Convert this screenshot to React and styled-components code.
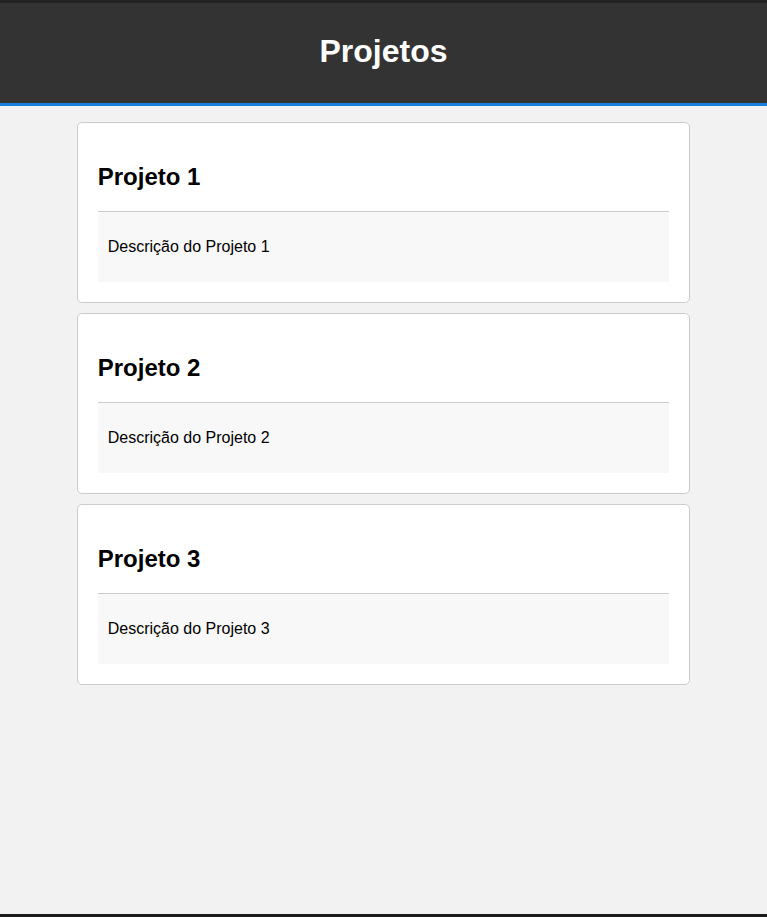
import React from "react";
import styled, { createGlobalStyle } from "styled-components";

const GlobalStyle = createGlobalStyle`
  html, body {
    margin: 0;
    padding: 0;
    background-color: #f2f2f2;
    font-family: "Liberation Sans", Arial, sans-serif;
  }
`;

const Page = styled.div`
  min-height: 100vh;
  box-sizing: border-box;
  border-top: 3px solid #222;
  border-bottom: 3px solid #1b1b1b;
  background-color: #f2f2f2;
`;

const Header = styled.header`
  height: 103px;
  box-sizing: border-box;
  padding-bottom: 4px;
  background-color: #333;
  border-bottom: 3px solid #1a7ee0;
  display: flex;
  align-items: center;
  justify-content: center;
`;

const Title = styled.h1`
  margin: 0;
  color: #fff;
  font-size: 32px;
  font-weight: bold;
`;

const Main = styled.main`
  width: 80%;
  margin: 16px auto 0;
  display: flex;
  flex-direction: column;
  gap: 10px;
`;

const ProjectCard = styled.section`
  background-color: #fff;
  border: 1px solid #ccc;
  border-radius: 5px;
  padding: 0 20px 20px;
`;

const ProjectName = styled.h2`
  font-size: 24px;
  margin: 20px 0;
  padding-top: 20px;
  color: #000;
`;

const Description = styled.div`
  background-color: #f8f8f8;
  border-top: 1px solid #ccc;
  padding: 10px;

  p {
    margin: 16px 0;
    font-size: 16px;
    color: #000;
  }
`;

const projects = [
  { name: "Projeto 1", text: "Descrição do Projeto 1" },
  { name: "Projeto 2", text: "Descrição do Projeto 2" },
  { name: "Projeto 3", text: "Descrição do Projeto 3" },
];

const App = () => {
  return (
    <Page>
      <GlobalStyle />
      <Header>
        <Title>Projetos</Title>
      </Header>
      <Main>
        {projects.map((p) => (
          <ProjectCard key={p.name}>
            <ProjectName>{p.name}</ProjectName>
            <Description>
              <p>{p.text}</p>
            </Description>
          </ProjectCard>
        ))}
      </Main>
    </Page>
  );
};

export default App;
